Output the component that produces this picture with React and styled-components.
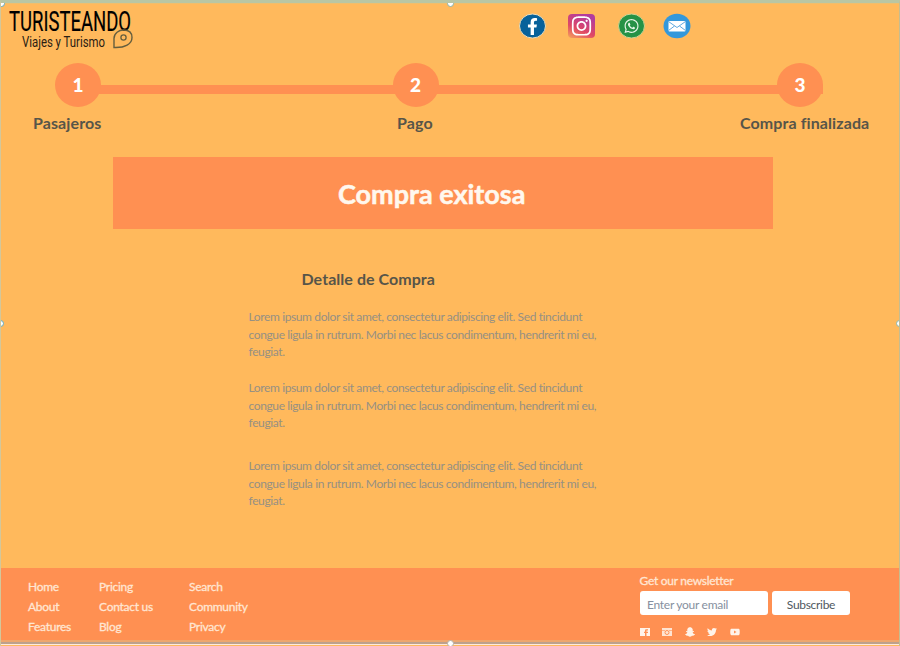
import React from "react";
import styled, { createGlobalStyle, css } from "styled-components";
import { FaFacebookF, FaWhatsapp, FaInstagram, FaTwitter, FaSnapchatGhost, FaYoutube } from "react-icons/fa";

const colors = {
  page: "#ffb95c",
  accent: "#ff9052",
  ink: "#575549",
  muted: "#969083",
  link: "#ffe6d3",
  frame: "#b9c6a3",
};

const GlobalStyle = createGlobalStyle`
  * { box-sizing: border-box; }
  body { margin: 0; font-family: Lato, "Liberation Sans", sans-serif; }
  p, h1, h2 { margin: 0; }
`;

const Page = styled.div`
  position: relative;
  display: flex;
  flex-direction: column;
  width: 900px;
  height: 646px;
  overflow: hidden;
  background: ${colors.page};
  border-top: 3px solid ${colors.frame};
  border-left: 1px solid #d3c79b;
  border-right: 1px solid #c5bd91;
  box-shadow: inset 0 1px #efbe6c;
  white-space: nowrap;
`;

const TopEdge = styled.div`
  position: absolute;
  top: -3px;
  left: -1px;
  width: 900px;
  height: 1px;
  background: #86a58d;
`;

const Handle = styled.i`
  position: absolute;
  width: 7px;
  height: 7px;
  border: 1px solid #8bb3a9;
  border-radius: 50%;
  background: #fff;
  ${(p) => p.$at === "top" && css`top: -3px; left: 446px;`}
  ${(p) => p.$at === "left" && css`top: 317px; left: -4px; border-color: #62a9bd;`}
  ${(p) => p.$at === "right" && css`top: 317px; right: -4px;`}
  ${(p) => p.$at === "bottom" && css`bottom: -1px; left: 446px; border-color: #b5aea4;`}
  ${(p) => p.$at === "corner" && css`top: -3px; left: -3px; border-color: #62a9bd;`}
`;

const Header = styled.header`
  display: flex;
  align-items: flex-start;
  height: 60px;
`;

const Logo = styled.svg`
  width: 140px;
  height: 52px;
  overflow: visible;
  font-family: Roboto, sans-serif;
`;

const Contacts = styled.nav`
  display: flex;
  padding: 9px 0 0 377px;
  gap: 21px;
`;

const ContactIcon = styled.svg`
  width: 28px;
  height: 28px;
  overflow: visible;
`;

const Track = styled.div`
  position: relative;
  display: flex;
  justify-content: space-between;
  width: 768px;
  height: 44px;
  margin-left: 54px;
  background: linear-gradient(${colors.accent}, ${colors.accent}) 23px 22px / 745px 9px no-repeat;
`;

const StepDot = styled.div`
  width: 46px;
  height: 44px;
  border-radius: 50%;
  background: ${colors.accent};
  color: #fff;
  font-size: 19px;
  font-weight: 900;
  line-height: 44px;
  text-align: center;
  ${(p) => p.$shift && css`margin-right: 47px;`}
`;

const StepLabels = styled.div`
  display: grid;
  grid-template-columns: 364px 343px 1fr;
  padding-left: 32px;
  height: 50px;
`;

const StepLabel = styled.span`
  color: ${colors.ink};
  font-size: 16px;
  font-weight: 700;
  letter-spacing: 0.1px;
  font-variant-ligatures: common-ligatures;
  line-height: 20px;
  padding-top: 6px;
`;

const Banner = styled.section`
  width: 660px;
  height: 72px;
  flex: none;
  margin-left: 112px;
  padding-left: 225px;
  background: ${colors.accent};
`;

const BannerTitle = styled.h1`
  color: #fff8ee;
  font-size: 27px;
  font-weight: 700;
  line-height: 74px;
  -webkit-text-stroke: 0.5px #fff8ee;
`;

const Details = styled.main`
  height: 338.5px;
  flex: none;
  padding: 40px 0 0 247.5px;
`;

const DetailsTitle = styled.h2`
  color: ${colors.ink};
  font-size: 16px;
  font-weight: 700;
  letter-spacing: 0.05px;
  line-height: 20px;
  padding-left: 53px;
`;

const Paragraph = styled.p`
  color: ${colors.muted};
  font-size: 12px;
  letter-spacing: -0.38px;
  line-height: 17.5px;
  margin-top: ${(p) => p.$gap}px;
`;

const Footer = styled.footer`
  display: flex;
  height: 77.5px;
  flex: none;
  background: ${colors.accent};
  border-bottom: 1px solid #ffeadb;
  box-shadow: inset 0 -2px #bda18d, inset 0 -4px #eea66d;
`;

const LinkColumn = styled.div`
  display: flex;
  flex-direction: column;
  width: ${(p) => p.$width}px;
  padding-top: 9px;
`;

const FooterLink = styled.a`
  color: ${colors.link};
  font-size: 12px;
  letter-spacing: -0.27px;
  line-height: 20px;
  -webkit-text-stroke: 0.3px ${colors.link};
`;

const LinkGroup = styled.div`
  display: flex;
  width: 638.5px;
  padding-left: 27px;
`;

const Newsletter = styled.div`
  padding-top: 5px;
`;

const NewsletterTitle = styled.div`
  color: ${colors.link};
  font-size: 12px;
  letter-spacing: -0.28px;
  line-height: 16px;
  -webkit-text-stroke: 0.3px ${colors.link};
`;

const Form = styled.div`
  display: flex;
  gap: 4.5px;
  margin-top: 2px;
`;

const EmailField = styled.div`
  width: 128px;
  height: 24px;
  padding-left: 7.5px;
  border-radius: 3px;
  background: #fff;
  color: #8690a0;
  font-size: 12px;
  letter-spacing: -0.27px;
  line-height: 27px;
`;

const SubscribeButton = styled.div`
  width: 78px;
  height: 24px;
  border-radius: 3px;
  background: #fff;
  color: #505860;
  font-size: 12px;
  letter-spacing: -0.3px;
  line-height: 27px;
  text-align: center;
`;

const Socials = styled.div`
  display: flex;
  align-items: center;
  gap: 12.6px;
  margin-top: 12.5px;
  color: #fff3e9;
  svg { width: 10px; height: 10px; display: block; }
`;

const text = [
  "Lorem ipsum dolor sit amet, consectetur adipiscing elit. Sed tincidunt",
  "congue ligula in rutrum. Morbi nec lacus condimentum, hendrerit mi eu,",
  "feugiat.",
];

const linkColumns = [
  { width: 71, links: ["Home", "About", "Features"] },
  { width: 90, links: ["Pricing", "Contact us", "Blog"] },
  { width: 90, links: ["Search", "Community", "Privacy"] },
];

function Brand() {
  return (
    <Logo viewBox="0 0 140 52">
      <text x="8" y="27.5" fontSize="28" textLength="122" lengthAdjust="spacingAndGlyphs" stroke="#000" strokeWidth=".2">TURISTEANDO</text>
      <text x="21" y="43.5" fontSize="14" textLength="83" lengthAdjust="spacingAndGlyphs" fill="#2a2013">Viajes y Turismo</text>
      <path d="M113 44.5V35.5C113 30 118 27 122.5 27C128 27 131 30 131 34.5C131 41 124 45 113 44.5Z" fill="none" stroke="#655e3e" strokeWidth="1.4" />
      <circle cx="122.5" cy="34.5" r="2.6" fill="none" stroke="#655e3e" strokeWidth="1.3" />
    </Logo>
  );
}

function Paragraphs() {
  return [19, 18.5, 25.5].map((gap, i) => (
    <Paragraph key={i} $gap={gap}>
      {text.map((line) => <React.Fragment key={line}>{line}<br /></React.Fragment>)}
    </Paragraph>
  ));
}

export default function App() {
  return (
    <Page>
      <GlobalStyle />
      <TopEdge />
      <Header>
        <Brand />
        <Contacts>
          <ContactIcon viewBox="0 0 28 28">
            <ellipse cx="14.5" cy="14" rx="13" ry="12" fill="#07619a" stroke="#e8ddbd" />
            <FaFacebookF x="6" y="6" size={17} color="#fff" />
          </ContactIcon>
          <ContactIcon viewBox="0 0 28 28">
            <defs>
              <linearGradient id="insta" x1="0" y1="1" x2=".5" y2="0">
                <stop stopColor="#f6a35a" /><stop offset=".45" stopColor="#df4865" /><stop offset="1" stopColor="#b33c9e" />
              </linearGradient>
            </defs>
            <rect x="1" y="2" width="27" height="24" rx="4" fill="url(#insta)" />
            <FaInstagram x="3.5" y="3" size={22} color="#fff" />
          </ContactIcon>
          <ContactIcon viewBox="0 0 28 28">
            <ellipse cx="15.5" cy="14" rx="13" ry="12" fill="#259246" stroke="#c9d495" />
            <FaWhatsapp x="7.5" y="6" size={16} color="#e5f5e7" />
          </ContactIcon>
          <ContactIcon viewBox="0 0 28 28">
            <g transform="translate(-1.5 0)">
              <ellipse cx="13.5" cy="14" rx="13.5" ry="12.2" fill="#3498db" />
              <rect x="5" y="9" width="17" height="10.5" rx="1" fill="#fff" />
              <path d="M5 9.5L13.5 15.5L22 9.5M5 18.5L11 14M22 18.5L16 14" fill="none" stroke="#62aade" strokeWidth="1" />
            </g>
          </ContactIcon>
        </Contacts>
      </Header>
      <Track>
        <StepDot>1</StepDot>
        <StepDot $shift>2</StepDot>
        <StepDot>3</StepDot>
      </Track>
      <StepLabels>
        <StepLabel>Pasajeros</StepLabel>
        <StepLabel>Pago</StepLabel>
        <StepLabel>Compra finalizada</StepLabel>
      </StepLabels>
      <Banner><BannerTitle>Compra exitosa</BannerTitle></Banner>
      <Details>
        <DetailsTitle>Detalle de Compra</DetailsTitle>
        <Paragraphs />
      </Details>
      <Footer>
        <LinkGroup>
          {linkColumns.map((column) => (
            <LinkColumn key={column.links[0]} $width={column.width}>
              {column.links.map((link) => <FooterLink key={link}>{link}</FooterLink>)}
            </LinkColumn>
          ))}
        </LinkGroup>
        <Newsletter>
          <NewsletterTitle>Get our newsletter</NewsletterTitle>
          <Form>
            <EmailField>Enter your email</EmailField>
            <SubscribeButton>Subscribe</SubscribeButton>
          </Form>
          <Socials>
            <svg viewBox="0 0 10 10"><path fillRule="evenodd" fill="currentColor" d="M0 1H10V9H0ZM5 9H6.5V6H8V4.8H6.5V3.5H8V2.3H6C5 2.3 5 3 5 4.8H4V6H5Z" /></svg>
            <svg viewBox="0 0 10 10"><rect y="1" width="10" height="8" fill="currentColor" opacity=".85" /><circle cx="5" cy="5.5" r="2" fill="none" stroke="#ff9052" /><path d="M0 3.5H3M7 3.5H10" stroke="#ff9052" strokeWidth=".6" /></svg>
            <FaSnapchatGhost />
            <FaTwitter />
            <FaYoutube />
          </Socials>
        </Newsletter>
      </Footer>
      <Handle $at="corner" />
      <Handle $at="top" />
      <Handle $at="left" />
      <Handle $at="right" />
      <Handle $at="bottom" />
    </Page>
  );
}
